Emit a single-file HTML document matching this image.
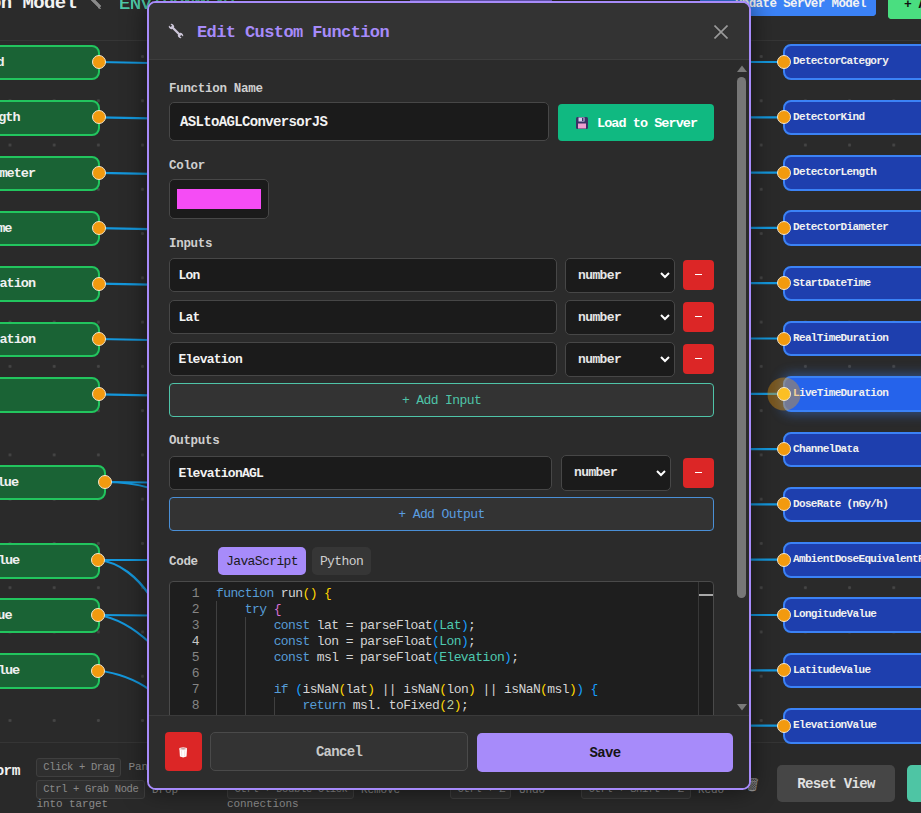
<!DOCTYPE html>
<html><head><meta charset="utf-8">
<style>
*{box-sizing:border-box;margin:0;padding:0}
html,body{width:921px;height:813px;overflow:hidden;background:#232323;font-family:"Liberation Mono",monospace;}
.abs{position:absolute}
#canvas{position:absolute;left:0;top:40px;width:921px;height:702px;background-color:#2a2a2a;
 background-image:radial-gradient(circle,#454545 1.3px,transparent 1.6px);
 background-size:44.2px 44.28px;background-position:-12.1px -5.64px;overflow:hidden}
#topbar{position:absolute;left:0;top:0;width:921px;height:40.5px;background:#2b2b2b;border-bottom:1px solid #363636}
#botbar{position:absolute;left:0;top:742px;width:921px;height:71px;background:#292929;border-top:1px solid #353535}
.lnode{position:absolute;height:35.5px;background:#1a6335;border:2px solid #22c55e;border-radius:8px;color:#f0f0f0;font-weight:bold;font-size:13.5px;text-align:right;white-space:nowrap;line-height:32px;letter-spacing:-1px;overflow:hidden}
.rnode{position:absolute;left:783px;width:200px;height:35.5px;background:#1e3fae;border:2px solid #3b82f6;border-radius:8px;color:#f0f0f0;font-weight:bold;font-size:11px;white-space:nowrap;line-height:31.5px;padding-left:8px;letter-spacing:-0.65px}
.handle{position:absolute;width:14px;height:14px;border-radius:50%;background:#f29a0f;border:1px solid #f3e6cc;margin:-7px 0 0 -7px}
.kbd{position:absolute;height:19px;border:1px solid #3f3f3f;background:#2f2f2f;border-radius:3px;color:#8a8a8a;font-size:10.5px;line-height:17px;padding:0 0 0 6.5px;letter-spacing:-0.35px;white-space:nowrap}
.btxt{position:absolute;color:#8a8a8a;font-size:11px;line-height:1;letter-spacing:-0.1px;white-space:nowrap}
#modal{position:absolute;left:147px;top:1px;width:604px;height:789px;border:2px solid #a78bfa;border-radius:8.5px;background:#2b2b2b;overflow:hidden;box-shadow:0 0 24px rgba(0,0,0,.55)}

#modal .a{position:absolute;white-space:nowrap}
.lbl{position:absolute;left:20px;font-size:12.5px;line-height:1;font-weight:bold;color:#cfcfcf;letter-spacing:-0.3px}
.inp{position:absolute;left:20px;background:#1b1b1b;border:1px solid #474747;border-radius:5px;color:#f2f2f2;font-size:13px;line-height:1;letter-spacing:-0.6px;font-weight:bold}
.sel{position:absolute;background:#1b1b1b;border:1px solid #474747;border-radius:5px;color:#e6e6e6;font-size:13px;line-height:1;letter-spacing:-0.6px;font-weight:bold}
.sel svg{position:absolute;right:4.5px;top:13px}
.minus{position:absolute;left:534px;width:31px;height:30px;background:#dc2626;border-radius:4px}
.minus:after{content:"";position:absolute;left:12px;top:14px;width:7px;height:1.3px;background:#fff}
.addb{position:absolute;left:20px;width:545px;height:34px;background:#333;border-radius:4px;font-size:13px;line-height:34.5px;text-align:center;letter-spacing:-0.6px}
.code{position:absolute;font-size:13px;line-height:16px;letter-spacing:-0.6px;white-space:pre;color:#d4d4d4}
.k{color:#569cd6}.y{color:#ffd700}.m{color:#da70d6}.b{color:#179fff}.t{color:#4ec9b0}.n{color:#b5cea8}

.rnode.hl{background:#2563eb;border-color:#3b82f6;box-shadow:0 0 12px 2px rgba(59,130,246,.45)}
.handle.hh{background:#fbbf24;box-shadow:0 0 0 9.5px rgba(245,158,11,.38)}
</style></head><body>

<div id="canvas"></div>
<div id="topbar">
  <div class="abs" style="left:-10px;top:-5.8px;font-size:19px;font-weight:bold;color:#f2f2f2;line-height:1;letter-spacing:-0.6px;white-space:nowrap">on Model</div><svg class="abs" style="left:89px;top:-3px" width="13" height="13" viewBox="0 0 13 13"><path d="M2 1 L11 10" stroke="#8a8a8a" stroke-width="3"/><path d="M10 9 L12 12 L9 11Z" fill="#8a8a8a"/></svg>
  <div class="abs" style="left:119px;top:-5.3px;font-size:19px;color:#4fc9a8;line-height:1;letter-spacing:-0.6px;white-space:nowrap">ENVIRONMENT</div>
  <div class="abs" style="left:410px;top:0;width:142px;height:2px;background:#7f6be0"></div>
  <div class="abs" style="left:700px;top:-10px;width:176px;height:25.5px;background:#3b82f6;border-radius:4px;color:#f4f4f4;font-weight:bold;font-size:12.5px;line-height:1;padding:8px 0 0 0;text-align:right;padding-right:10px;letter-spacing:-0.6px;white-space:nowrap">Update Server Model</div>
  <div class="abs" style="left:888px;top:-10px;width:60px;height:28.7px;background:#4ade80;border-radius:4px;color:#111;font-weight:bold;font-size:13px;line-height:1;padding:7.5px 0 0 16px;letter-spacing:-0.6px;white-space:nowrap">+ Add</div>
</div>

<svg class="abs" style="left:89px;top:-3px" width="13" height="13" viewBox="0 0 13 13"><path d="M2 1 L11 10" stroke="#8a8a8a" stroke-width="3"/><path d="M10 9 L12 12 L9 11Z" fill="#8a8a8a"/></svg>
  <div class="abs" style="left:119px;top:-5.3px;font-size:19px;color:#4fc9a8;line-height:1;letter-spacing:-0.6px;white-space:nowrap">ENVIRONMENT</div>
  <div class="abs" style="left:410px;top:0;width:142px;height:2px;background:#7f6be0"></div>
  <div class="abs" style="left:700px;top:-10px;width:176px;height:25.5px;background:#3b82f6;border-radius:4px;color:#f4f4f4;font-weight:bold;font-size:12.5px;line-height:1;padding:8px 0 0 0;text-align:right;padding-right:10px;letter-spacing:-0.6px;white-space:nowrap">Update Server Model</div>
  <div class="abs" style="left:888px;top:-10px;width:60px;height:28.7px;background:#4ade80;border-radius:4px;color:#111;font-weight:bold;font-size:13px;line-height:1;padding:7.5px 0 0 16px;letter-spacing:-0.6px;white-space:nowrap">+ Add</div>
</div>

<div id="botbar">
  <div class="abs" style="right:901px;top:20.5px;font-size:14.5px;line-height:1;font-weight:bold;color:#f2f2f2;letter-spacing:-0.5px;white-space:nowrap">Transform</div>
  <div class="kbd" style="left:35.8px;top:15px;width:85px">Click + Drag</div><div class="btxt" style="left:128.5px;top:18.5px">Pan</div>
  <div class="kbd" style="left:35.8px;top:37px;width:109px">Ctrl + Grab Node</div><div class="btxt" style="left:152px;top:42px">Drop</div>
  <div class="btxt" style="left:36.5px;top:56px">into target</div>
  <div class="kbd" style="left:227px;top:37px;width:127px">Ctrl + Double Click</div><div class="btxt" style="left:361px;top:42px">Remove</div>
  <div class="btxt" style="left:227px;top:56px">connections</div>
  <div class="kbd" style="left:450px;top:37px;width:61px">Ctrl + Z</div><div class="btxt" style="left:519px;top:42px">Undo</div>
  <div class="kbd" style="left:581px;top:37px;width:110px">Ctrl + Shift + Z</div><div class="btxt" style="left:698px;top:42px">Redo</div>
  <div class="abs" style="left:744px;top:35px;width:13px;height:15px;color:#999;font-size:13px;line-height:15px">&#128465;</div>
  <div class="abs" style="left:777px;top:22px;width:118px;height:37px;background:#464646;border-radius:5px;color:#e0e0e0;font-weight:bold;font-size:14px;line-height:38px;text-align:center;letter-spacing:-0.65px">Reset View</div>
  <div class="abs" style="left:907px;top:22px;width:60px;height:37px;background:#4ec5a4;border-radius:5px"></div>
</div>
<svg class="abs" style="left:0;top:0" width="921" height="813">
 <g stroke="#1497dc" stroke-width="2.2" fill="none">
  <path d="M99 62 L150 63"/><path d="M99 117.4 L150 118.4"/><path d="M99 172.8 L150 173.8"/><path d="M99 228.2 L150 229.2"/>
  <path d="M99 283.6 L150 284.6"/><path d="M99 339 L150 340"/><path d="M99 394.4 L150 395.4"/>
  <path d="M105 482 L150 482.5"/><path d="M105 482 C125 482 140 485 150 488"/>
  <path d="M98 560 L150 560"/><path d="M98 560 C120 562 138 578 150 596"/>
  <path d="M98 615 L150 615.5"/><path d="M98 615 C118 618 136 630 150 643"/>
  <path d="M98 670.5 C118 673 136 680 150 690"/>
  <path d="M748 62 L784 62"/><path d="M748 117.3 L784 117.3"/><path d="M748 172.6 L784 172.6"/><path d="M748 227.9 L784 227.9"/>
  <path d="M748 283.2 L784 283.2"/><path d="M748 338.5 L784 338.5"/><path d="M748 393.8 L784 393.8"/><path d="M748 449.1 L784 449.1"/>
  <path d="M748 504.4 L784 504.4"/><path d="M748 559.7 L784 559.7"/><path d="M748 615 L784 615"/><path d="M748 670.3 L784 670.3"/><path d="M748 725.6 L784 725.6"/>
 </g>
</svg>
<div id="nodes">
<div class="lnode" style="left:-100.0px;top:44.7px;width:200px;padding-right:94.5px">DetectorKind</div><div class="handle" style="left:98.7px;top:62.0px"></div>
<div class="lnode" style="left:-100.0px;top:100.1px;width:200px;padding-right:78.5px">DetectorLength</div><div class="handle" style="left:98.7px;top:117.4px"></div>
<div class="lnode" style="left:-100.0px;top:155.5px;width:200px;padding-right:63.0px">DetectorDiameter</div><div class="handle" style="left:98.7px;top:172.8px"></div>
<div class="lnode" style="left:-100.0px;top:210.9px;width:200px;padding-right:86.6px">StartDateTime</div><div class="handle" style="left:98.7px;top:228.2px"></div>
<div class="lnode" style="left:-100.0px;top:266.3px;width:200px;padding-right:63.0px">RealTimeDuration</div><div class="handle" style="left:98.7px;top:283.6px"></div>
<div class="lnode" style="left:-100.0px;top:321.7px;width:200px;padding-right:63.0px">RealTimeDuration</div><div class="handle" style="left:98.7px;top:339.0px"></div>
<div class="lnode" style="left:-100.0px;top:377.1px;width:200px;padding-right:98.0px"></div><div class="handle" style="left:98.7px;top:394.4px"></div>
<div class="lnode" style="left:-94.0px;top:464.7px;width:200px;padding-right:86.0px">DoseRateValue</div><div class="handle" style="left:104.7px;top:482.0px"></div>
<div class="lnode" style="left:-100.4px;top:543.0px;width:200px;padding-right:78.4px">DoseRateValue</div><div class="handle" style="left:98.3px;top:560.3px"></div>
<div class="lnode" style="left:-100.4px;top:597.8px;width:200px;padding-right:86.1px">LongitudeValue</div><div class="handle" style="left:98.3px;top:615.1px"></div>
<div class="lnode" style="left:-100.4px;top:653.3px;width:200px;padding-right:78.4px">DoseRateValue</div><div class="handle" style="left:98.3px;top:670.6px"></div>
<div class="rnode" style="top:44.4px">DetectorCategory</div><div class="handle" style="left:783.5px;top:62.0px"></div>
<div class="rnode" style="top:99.7px">DetectorKind</div><div class="handle" style="left:783.5px;top:117.3px"></div>
<div class="rnode" style="top:155.0px">DetectorLength</div><div class="handle" style="left:783.5px;top:172.6px"></div>
<div class="rnode" style="top:210.3px">DetectorDiameter</div><div class="handle" style="left:783.5px;top:227.9px"></div>
<div class="rnode" style="top:265.6px">StartDateTime</div><div class="handle" style="left:783.5px;top:283.2px"></div>
<div class="rnode" style="top:320.9px">RealTimeDuration</div><div class="handle" style="left:783.5px;top:338.5px"></div>
<div class="rnode hl" style="top:376.2px">LiveTimeDuration</div><div class="handle hh" style="left:783.5px;top:393.8px"></div>
<div class="rnode" style="top:431.5px">ChannelData</div><div class="handle" style="left:783.5px;top:449.1px"></div>
<div class="rnode" style="top:486.8px">DoseRate (nGy/h)</div><div class="handle" style="left:783.5px;top:504.4px"></div>
<div class="rnode" style="top:542.1px">AmbientDoseEquivalentRate</div><div class="handle" style="left:783.5px;top:559.7px"></div>
<div class="rnode" style="top:597.4px">LongitudeValue</div><div class="handle" style="left:783.5px;top:615.0px"></div>
<div class="rnode" style="top:652.7px">LatitudeValue</div><div class="handle" style="left:783.5px;top:670.3px"></div>
<div class="rnode" style="top:708.0px">ElevationValue</div><div class="handle" style="left:783.5px;top:725.6px"></div>
</div>
<div id="modal">
 <div class="a" style="left:0;top:0;width:600px;height:57px;background:#333;border-bottom:1px solid #3d3d3d"></div>
 <svg class="a" style="left:19px;top:20px" width="16" height="16" viewBox="-9 -9 18 18"><defs><mask id="wm"><rect x="-12" y="-12" width="24" height="24" fill="#fff"/><rect x="-12" y="-1.1" width="4.6" height="2.2" fill="#000"/><rect x="7.4" y="-1.1" width="4.6" height="2.2" fill="#000"/></mask></defs><g transform="rotate(45)" mask="url(#wm)" fill="#cdc6d9"><rect x="-6" y="-1.3" width="12" height="2.6"/><circle cx="-7.2" cy="0" r="2.9"/><circle cx="7.2" cy="0" r="2.9"/></g></svg>
 <div class="a" style="left:48px;top:21px;font-size:17px;line-height:1;font-weight:bold;color:#a78bfa;letter-spacing:-0.6px">Edit Custom Function</div>
 <svg class="a" style="left:565px;top:22px" width="14" height="14"><path d="M0.5 0.5 L13.5 13.5 M13.5 0.5 L0.5 13.5" stroke="#9a9a9a" stroke-width="1.6"/></svg>

 <div class="lbl" style="top:79.7px">Function Name</div>
 <div class="inp" style="top:99px;width:380px;height:39px;padding:12px 0 0 10px;font-size:14px;letter-spacing:-0.65px">ASLtoAGLConversorJS</div>
 <div class="a" style="left:409px;top:101px;width:156px;height:37px;background:#10b981;border-radius:4px"></div>
 <svg class="a" style="left:427px;top:114px" width="12" height="12" viewBox="0 0 12 12"><rect x="0" y="0" width="12" height="12" rx="1.5" fill="#3b3266"/><rect x="2.5" y="0.5" width="6" height="4" fill="#d8d0ee"/><rect x="6" y="1" width="1.5" height="3" fill="#3b3266"/><rect x="2" y="6.5" width="8" height="5" fill="#f0a0d0"/></svg>
 <div class="a" style="left:448px;top:113.5px;font-size:13.5px;line-height:1;font-weight:bold;color:#fff;letter-spacing:-0.95px">Load to Server</div>

 <div class="lbl" style="top:157px">Color</div>
 <div class="a" style="left:20px;top:176px;width:100px;height:40px;background:#1b1b1b;border:1px solid #474747;border-radius:5px"></div>
 <div class="a" style="left:28px;top:186px;width:84px;height:20px;background:#f54cf5"></div>

 <div class="lbl" style="top:235px">Inputs</div>
 <div class="inp" style="top:255px;width:388px;height:34px;padding:10.3px 0 0 8.5px;letter-spacing:-0.75px">Lon</div><div class="sel" style="left:416px;top:254.5px;width:110px;height:35.5px;padding:10px 0 0 12px">number<svg width="10" height="7"><path d="M1 1 L5 5 L9 1" fill="none" stroke="#fff" stroke-width="2"/></svg></div><div class="minus" style="top:257px"></div>
<div class="inp" style="top:297px;width:388px;height:34px;padding:10.3px 0 0 8.5px;letter-spacing:-0.75px">Lat</div><div class="sel" style="left:416px;top:296.5px;width:110px;height:35.5px;padding:10px 0 0 12px">number<svg width="10" height="7"><path d="M1 1 L5 5 L9 1" fill="none" stroke="#fff" stroke-width="2"/></svg></div><div class="minus" style="top:299px"></div>
<div class="inp" style="top:339px;width:388px;height:34px;padding:10.3px 0 0 8.5px;letter-spacing:-0.75px">Elevation</div><div class="sel" style="left:416px;top:338.5px;width:110px;height:35.5px;padding:10px 0 0 12px">number<svg width="10" height="7"><path d="M1 1 L5 5 L9 1" fill="none" stroke="#fff" stroke-width="2"/></svg></div><div class="minus" style="top:341px"></div>

 <div class="addb" style="top:380px;border:1px solid #4fc4a8;color:#4fc4a8">+ Add Input</div>

 <div class="lbl" style="top:432px">Outputs</div>
 <div class="inp" style="top:453px;width:383px;height:34px;padding:10.3px 0 0 8.5px;letter-spacing:-0.75px">ElevationAGL</div><div class="sel" style="left:412px;top:452px;width:110px;height:35.5px;padding:10px 0 0 12px">number<svg width="10" height="7" style="top:14px"><path d="M1 1 L5 5 L9 1" fill="none" stroke="#fff" stroke-width="2"/></svg></div><div class="minus" style="top:455px"></div>

 <div class="addb" style="top:493.7px;border:1px solid #4a8fd6;color:#5a9de0">+ Add Output</div>

 <div class="lbl" style="top:553px">Code</div>
 <div class="a" style="left:69px;top:544px;width:88px;height:28px;background:#a78bfa;border-radius:5px;color:#1a1a1a;font-size:13px;line-height:30px;text-align:center;letter-spacing:-0.6px">JavaScript</div>
 <div class="a" style="left:163px;top:544px;width:59px;height:28px;background:#363636;border-radius:5px;color:#cfcfcf;font-size:13px;line-height:30px;text-align:center;letter-spacing:-0.6px">Python</div>

 <div class="a" style="left:20px;top:578px;width:544.5px;height:160px;background:#1e1e1e;border:1px solid #4a4a4a;border-radius:4px;overflow:hidden">
   <div class="a" style="left:528px;top:0;width:1px;height:160px;background:#383838"></div>
   <div class="a" style="left:529px;top:12px;width:15px;height:2px;background:#a8a8a8"></div>
   <div class="a" style="left:46px;top:19px;width:1px;height:140px;background:#404040"></div>
   <div class="a" style="left:75px;top:35px;width:1px;height:120px;background:#404040"></div>
   <div class="a" style="left:104px;top:115px;width:1px;height:40px;background:#404040"></div>
   <div class="code" style="left:0;top:4.2px;width:29px;text-align:right;color:#858585">1
2
3
<span style="color:#c6c6c6">4</span>
5
6
7
8
9</div>
   <div class="code" style="left:46px;top:4.2px"><span class="k">function</span> run<span class="y">()</span> <span class="y">{</span>
    <span class="k">try</span> <span class="m">{</span>
        <span class="k">const</span> lat = parseFloat<span class="b">(</span><span class="t">Lat</span><span class="b">)</span>;
        <span class="k">const</span> lon = parseFloat<span class="b">(</span><span class="t">Lon</span><span class="b">)</span>;
        <span class="k">const</span> msl = parseFloat<span class="b">(</span><span class="t">Elevation</span><span class="b">)</span>;

        <span class="k">if</span> <span class="b">(</span>isNaN<span class="y">(</span>lat<span class="y">)</span> || isNaN<span class="y">(</span>lon<span class="y">)</span> || isNaN<span class="y">(</span>msl<span class="y">)</span><span class="b">)</span> <span class="b">{</span>
            <span class="k">return</span> msl. toFixed<span class="y">(</span><span class="n">2</span><span class="y">)</span>;
        <span class="b">}</span></div>
 </div>

 <svg class="a" style="left:588px;top:61.5px" width="10" height="7"><path d="M0 7 L5 0.5 L10 7Z" fill="#7a7a7a"/></svg>
 <div class="a" style="left:588px;top:74px;width:9px;height:521px;background:#777;border-radius:5px"></div>
 <svg class="a" style="left:588px;top:701px" width="10" height="7"><path d="M0 0 L5 6.5 L10 0Z" fill="#7a7a7a"/></svg>

 <div class="a" style="left:0;top:712px;width:600px;height:73px;background:#2d2d2d;border-top:1px solid #3a3a3a"></div>
 <div class="a" style="left:16px;top:729px;width:37px;height:39px;background:#dc2626;border-radius:4px"></div>
 <svg class="a" style="left:30.2px;top:744.4px" width="9" height="11" viewBox="0 0 9 11"><path d="M0.4 1.6 L0.9 9.6 Q4.2 11.2 7.5 9.6 L8 1.6Z" fill="#fff"/><path d="M2.5 3.5 L2.8 9.3 M5.8 3.5 L5.6 9.3" stroke="#f3d6d6" stroke-width="0.8"/><ellipse cx="4.2" cy="1.7" rx="3.9" ry="1.5" fill="#f5e0e0"/><ellipse cx="4.2" cy="1.7" rx="2.4" ry="0.7" fill="#c9a0a0"/></svg>
 <div class="a" style="left:61px;top:729.2px;width:258px;height:39.3px;background:#333;border:1px solid #4a4a4a;border-radius:5px;color:#c8c8c8;font-size:14px;font-weight:bold;line-height:39.5px;text-align:center;letter-spacing:-0.7px">Cancel</div>
 <div class="a" style="left:328px;top:729.5px;width:256px;height:39px;background:#a78bfa;border-radius:5px;color:#151515;font-size:14px;font-weight:bold;line-height:41px;text-align:center;letter-spacing:-0.7px">Save</div>
</div>
</body></html>
